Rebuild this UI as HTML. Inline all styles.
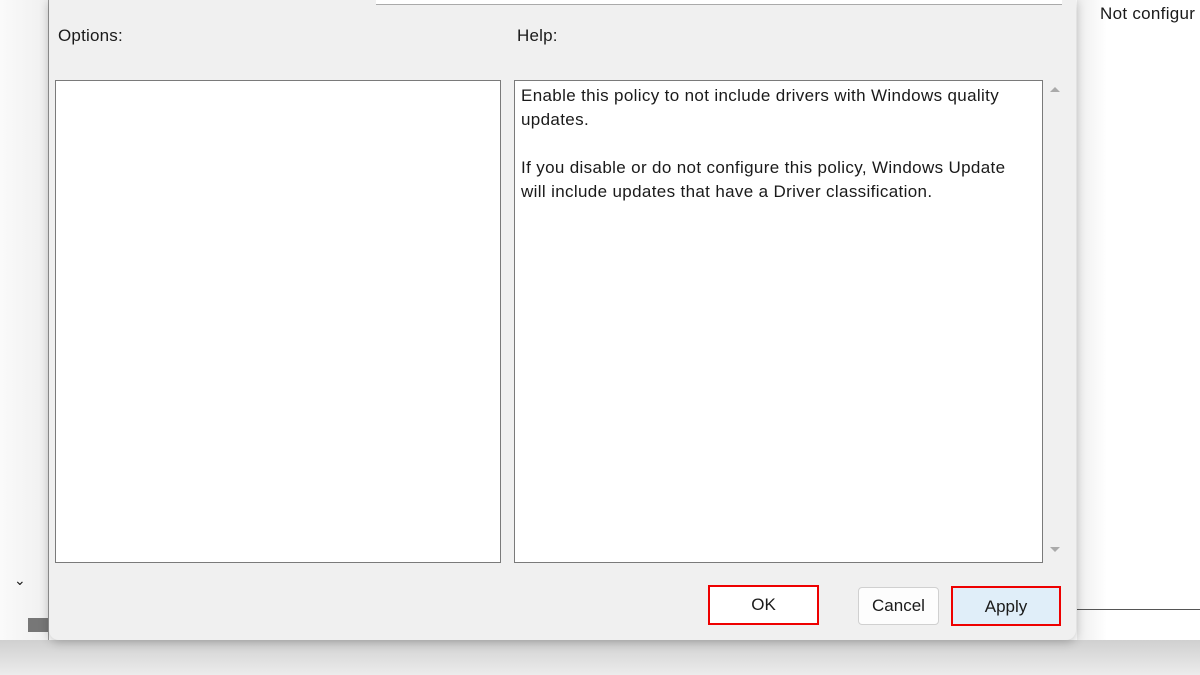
<!DOCTYPE html>
<html><head><style>
body{margin:0;width:1200px;height:675px;overflow:hidden;position:relative;background:#fff;font-family:"Liberation Sans",sans-serif;color:#1a1a1a}
.a{position:absolute}
</style></head><body>
<div class="a" style="left:0;top:0;width:48px;height:640px;background:linear-gradient(90deg,#fafafa,#f0f0f0);border-right:1px solid #999"></div>
<div class="a" style="left:1077px;top:0;width:123px;height:640px;background:linear-gradient(90deg,#eee,#fff 30px)"></div>
<div class="a" style="left:1100px;top:4px;font-size:17px;letter-spacing:0.3px">Not configur</div>
<div class="a" style="left:1077px;top:609px;width:123px;height:1px;background:#555"></div>
<div class="a" style="left:0;top:640px;width:1200px;height:35px;background:linear-gradient(180deg,#d0d0d0,#ececec)"></div>
<div class="a" style="left:14px;top:572px;font-size:14px">&#8964;</div>
<div class="a" style="left:28px;top:618px;width:20px;height:14px;background:#777"></div>
<div class="a" style="left:49px;top:0;width:1027px;height:640px;background:#f0f0f0;border-radius:0 0 10px 10px;box-shadow:0 2px 10px rgba(0,0,0,.25)"></div>
<div class="a" style="left:376px;top:0;width:686px;height:4px;background:#fff;border-bottom:1px solid #aaa"></div>
<div class="a" style="left:58px;top:26px;font-size:17px;letter-spacing:0.2px">Options:</div>
<div class="a" style="left:517px;top:26px;font-size:17px;letter-spacing:0.2px">Help:</div>
<div class="a" style="left:55px;top:80px;width:444px;height:481px;background:#fff;border:1px solid #7a7a7a"></div>
<div class="a" style="left:514px;top:80px;width:527px;height:481px;background:#fff;border:1px solid #7a7a7a"></div>
<div class="a" style="left:521px;top:84px;width:500px;font-size:17px;line-height:24px;letter-spacing:0.35px">Enable this policy to not include drivers with Windows quality updates.<br><br>If you disable or do not configure this policy, Windows Update will include updates that have a Driver classification.</div>
<div class="a" style="left:1050px;top:87px;width:0;height:0;border:5px solid transparent;border-bottom-color:#aaa;border-top:0"></div>
<div class="a" style="left:1050px;top:547px;width:0;height:0;border:5px solid transparent;border-top-color:#aaa;border-bottom:0"></div>
<div class="a" style="left:708px;top:585px;width:107px;height:36px;background:#fff;border:2px solid #e00;font-size:17px;text-align:center;line-height:36px">OK</div>
<div class="a" style="left:858px;top:587px;width:79px;height:36px;background:#fdfdfd;border:1px solid #d0d0d0;border-radius:4px;font-size:17px;text-align:center;line-height:36px">Cancel</div>
<div class="a" style="left:951px;top:586px;width:106px;height:36px;background:#e0eef9;border:2px solid #e00;font-size:17px;text-align:center;line-height:38px">Apply</div>
</body></html>
